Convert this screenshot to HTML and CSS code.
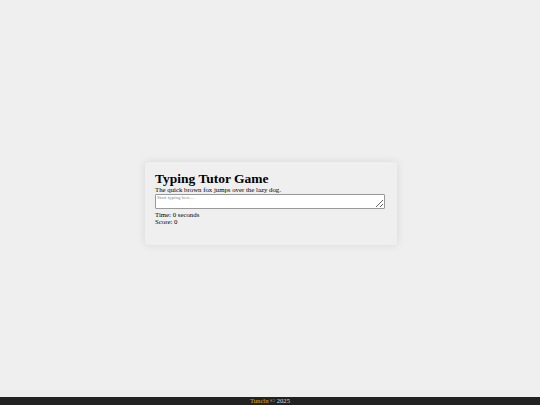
FILE: index.html
```html
<!DOCTYPE html>
<html lang="en">
<head>
<meta charset="utf-8">
<title>Typing Tutor Game</title>
<link rel="stylesheet" href="styles.css">
</head>
<body>
<main class="main">
  <div class="card">
    <h1 class="title">Typing Tutor Game</h1>
    <p class="sentence">The quick brown fox jumps over the lazy dog.</p>
    <textarea class="input" placeholder="Start typing here..."></textarea>
    <p class="stat">Time: 0 seconds</p>
    <p class="stat">Score: 0</p>
  </div>
</main>
<footer class="footer"><span class="brand">Tuncln</span> © 2025</footer>
</body>
</html>
```
FILE: styles.css
```css
html, body {
  margin: 0;
  padding: 0;
  height: 100%;
}
body {
  background: #efefef;
  font-family: "Liberation Serif", "Times New Roman", serif;
  color: #000;
  display: flex;
  flex-direction: column;
}
.main {
  flex: 1;
  display: flex;
  align-items: center;
  justify-content: center;
}
.card {
  width: 232px;
  padding: 10px 10px 19px;
  margin: 9px 0 0 2px;
  background: #efefef;
  box-shadow: 0 0 8px rgba(0, 0, 0, 0.1);
  border-radius: 3px;
}
.title {
  margin: 0;
  font-size: 13.5px;
  line-height: 14px;
  font-weight: bold;
}
.sentence {
  margin: 0;
  font-size: 6.8px;
  line-height: 8px;
}
.input {
  display: block;
  box-sizing: border-box;
  width: 230px;
  height: 15px;
  margin: 0 0 2px;
  padding: 0 1px;
  border: 1px solid #999;
  border-radius: 1px;
  background: #fff;
  font-family: "Liberation Serif", serif;
  font-size: 5px;
  line-height: 6px;
}
.input::placeholder {
  color: #888;
}
.stat {
  margin: 0;
  font-size: 6.8px;
  line-height: 7.5px;
}
.footer {
  height: 8px;
  background: #222;
  color: #ddd;
  text-align: center;
  font-size: 6.6px;
  line-height: 8px;
}
.brand {
  color: #e0b400;
}
```
